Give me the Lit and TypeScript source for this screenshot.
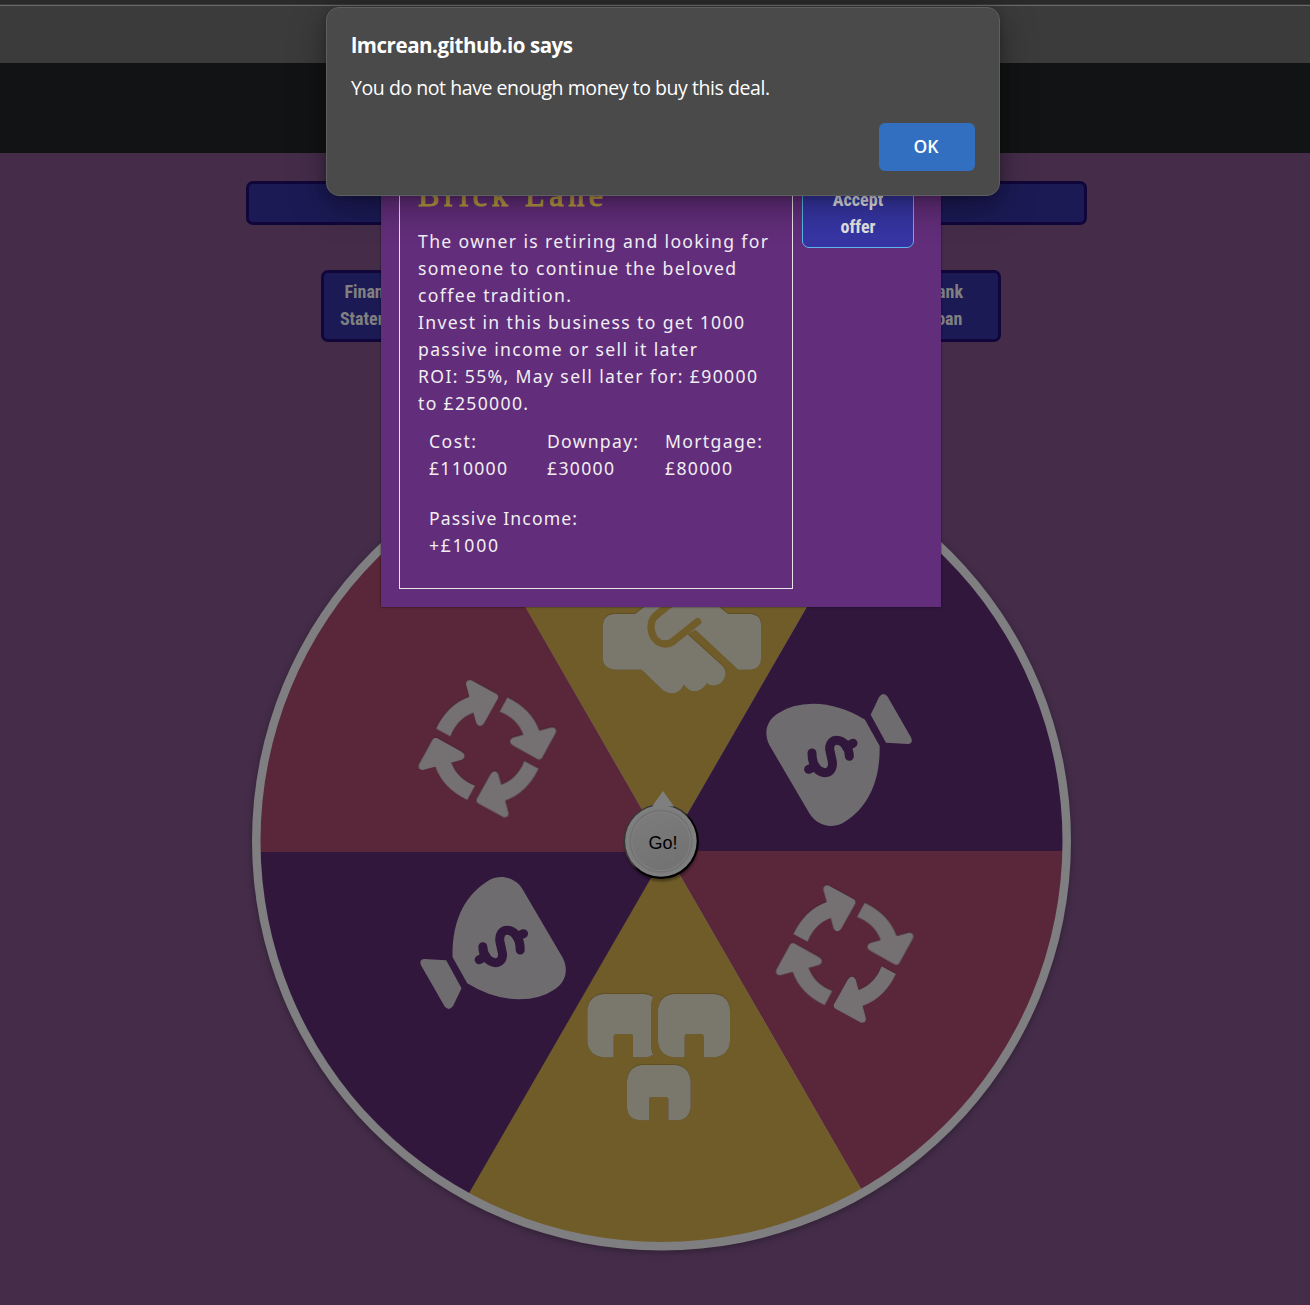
import { LitElement, html, css, svg } from "lit";
import { customElement, property } from "lit/decorators.js";

/** One line of text whose tracking is computed so that it spans a given width. */
@customElement("fit-text")
class FitText extends LitElement {
  @property({ type: Number }) w = 0;
  static styles = css`
    :host { display: block; white-space: nowrap; }
    .t { display: inline-block; }
  `;
  firstUpdated() {
    const el = this.renderRoot.querySelector(".t") as HTMLElement;
    const n = Math.max(1, (this.textContent || "").trim().length - 1);
    const natural = el.getBoundingClientRect().width;
    el.style.letterSpacing = `${((this.w - natural) / n).toFixed(3)}px`;
  }
  render() {
    return html`<span class="t"><slot></slot></span>`;
  }
}

@customElement("spin-wheel")
class SpinWheel extends LitElement {
  static styles = css`
    :host { display: block; width: 840px; height: 840px; }
    svg { display: block; }
    .pink { fill: #59263a; }
    .gold { fill: #705c28; }
    .plum { fill: #31173c; }
    .on-pink { fill: #757072; }
    .on-gold { fill: #7a776c; }
    .on-plum { fill: #6f6c70; }
    .go { font: 18px "Liberation Sans", Arial, sans-serif; fill: #000; }
    .icon { filter: drop-shadow(0 -0.5px 0.6px rgba(0, 0, 0, 0.4)); }
  `;
  private arrow =
    "M108 206 Q143 133 208 110 L198 73 Q198 58 213 60 L290 102 Q297 107 294 115 L252 190 Q240 206 229 190 L220 158 Q172 176 151 229 Z";
  private cycle() {
    return svg`<g class="on-pink">${[0, 90, 180, 270].map(
      (a) => svg`<path d=${this.arrow} transform="rotate(${a} 262 266)"/>`
    )}</g>`;
  }
  private bag() {
    return svg`<g class="on-plum">
      <path d="M389 198 L345 119 Q270 72 190 71 Q125 71 82 101 C48 124 41 160 58 195 L178 400 C198 434 240 448 277 430 C350 388 391 310 389 198Z"/>
      <path d="M362 104 L387 52 Q400 33 413 50 L484 174 Q490 190 474 192 L408 188Z"/>
      <g fill="none" stroke="#31173c" stroke-width="27" stroke-linecap="round">
        <path d="M186 219 C186 262 208 278 225 278 C243 278 249 262 247 245 L239 208 C238 188 250 181 260 181 C282 181 298 205 298 229"/>
        <path d="M176 268 L196 259 M309 190 L289 200"/>
      </g></g>`;
  }
  render() {
    return html`<svg width="840" height="840" viewBox="240 430 840 840">
      <defs>
        <clipPath id="disc"><circle cx="661.5" cy="841" r="401" /></clipPath>
        <linearGradient id="face" x1="0" y1="0" x2="0.4" y2="1">
          <stop offset="0" stop-color="#7c7c7c" />
          <stop offset="1" stop-color="#737373" />
        </linearGradient>
        <linearGradient id="rim" x1="0.15" y1="0.15" x2="0.85" y2="0.85">
          <stop offset="0.45" stop-color="#363636" />
          <stop offset="0.55" stop-color="#000" />
        </linearGradient>
        <filter id="soft" x="-20%" y="-20%" width="140%" height="140%"><feGaussianBlur stdDeviation="4" /></filter>
        <filter id="fine" x="-20%" y="-20%" width="140%" height="140%"><feGaussianBlur stdDeviation="0.8" /></filter>
      </defs>
      <circle cx="661.5" cy="843" r="409" fill="#000" opacity=".35" filter="url(#soft)" />
      <circle cx="661.5" cy="841" r="409.5" fill="#7f7e80" />
      <g clip-path="url(#disc)">
        <path class="gold" d="M666 851 L366 331.4 H966Z" />
        <path class="plum" d="M666 851 L966 331.4 H1166 V851Z" />
        <path class="pink" d="M666 851 H1166 V1370.6 H966Z" />
        <path class="gold" d="M666 851 L966 1370.6 H366Z" />
        <path class="plum" d="M666 852 L366 1371.6 H166 V852Z" />
        <path class="pink" d="M666.4 852 H166 V331.4 H366.4Z" />
      </g>

      <g class="icon" transform="translate(400 660) scale(.33333)">${this.cycle()}</g>
      <g class="icon" transform="translate(757.3 865.3) scale(.33333)">${this.cycle()}</g>
      <g transform="translate(750 680) scale(.33333)">${this.bag()}</g>
      <g transform="rotate(180 666.1 851.5) translate(750 680) scale(.33333)">${this.bag()}</g>

      <g class="icon" transform="translate(580 590) scale(.33333)">
        <path class="on-gold" d="M102 72 H165 L200 45 H410 L445 72 H510 Q543 74 543 105 V205 Q543 237 510 239 H475 L346 119 L323 133 L424 224 Q437 236 437 250 Q433 285 400 287 Q388 287 381 280 Q365 304 345 304 Q325 303 312 284 Q298 310 275 310 Q258 309 245 297 L185 239 H102 Q70 236 68 205 V105 Q70 74 102 72Z" />
        <path d="M275 38 L228 76 C198 103 216 162 256 162 Q268 162 278 155 L353 95" fill="none" stroke="#705c28" stroke-width="22" stroke-linecap="round" />
      </g>

      <g class="icon on-gold" transform="translate(570 970) scale(.33333)">
        <path d="M102 72 H222 Q236 72 249 80 Q243 95 243 115 V220 Q243 240 249 254 Q236 262 222 262 H189 V200 Q189 192 181 192 H139 Q131 192 131 200 V262 H102 Q56 258 52 214 V120 Q56 76 102 72Z" />
        <path d="M312 72 H432 Q476 76 480 120 V214 Q476 258 432 262 H401 V200 Q401 192 393 192 H352 Q344 192 344 200 V262 H312 Q268 258 264 214 V120 Q268 76 312 72Z" />
        <path d="M216 285 H316 Q358 290 362 332 V410 Q358 448 322 451 H295 V389 Q295 381 287 381 H245 Q237 381 237 389 V451 H208 Q174 448 171 414 V332 Q175 290 216 285Z" />
      </g>

      <circle cx="661.5" cy="844.5" r="37" fill="#000" opacity=".35" filter="url(#fine)" />
      <circle cx="661.2" cy="841.4" r="37.6" fill="url(#rim)" />
      <circle cx="660.9" cy="841" r="35.8" fill="#7f7f7f" />
      <path d="M663 791 L674 806.5 H652Z" fill="#7f7f7f" />
      <circle cx="661" cy="841.3" r="30.8" fill="#666" filter="url(#fine)" />
      <circle cx="661" cy="841.3" r="30" fill="#808080" />
      <circle cx="661" cy="841.3" r="28.8" fill="url(#face)" />
      <text class="go" x="648.5" y="849">Go!</text>
    </svg>`;
  }
}

@customElement("app-root")
class AppRoot extends LitElement {
  static styles = css`
    :host { display: block; position: relative; width: 1310px; height: 1305px; overflow: hidden; background: #452d4a; }
    * { box-sizing: border-box; }
    .page { display: flex; flex-direction: column; align-items: center; }
    .tabs { align-self: stretch; height: 5px; background: #2a2a2a; border-bottom: 1px solid #3a3a3a; }
    .tools { align-self: stretch; height: 58px; background: #3b3b3b; border-top: 1px solid #6a6a6a; }
    .nav { align-self: stretch; height: 90px; background: #111314; }
    .bar { width: 841px; height: 44px; margin: 28px 0 0 23px; border: 3px solid #10063a; border-radius: 7px; background: #1b1a55; }
    .row { width: 680px; margin: 45px 0 0 12px; display: flex; justify-content: space-between; }
    .btn { width: 112px; height: 72px; padding-bottom: 2px; border: 3px solid #10063a; border-radius: 7px; background: #1b1a55; color: #808080;
      display: flex; flex-direction: column; align-items: center; justify-content: center; }
    .cond { font: 700 18px/27px "Roboto Condensed", Roboto, sans-serif; font-stretch: 75%; }
    spin-wheel { margin: 88px 0 0 10px; }

    .modal { position: absolute; left: 381px; top: 60px; width: 560px; height: 547px; background: #622d7a; padding: 18px;
      display: flex; gap: 9px; align-items: stretch; box-shadow: 0 0 2px rgba(0, 0, 0, 0.6); }
    .card { width: 394px; border: 1px solid #e9e4ec; padding: 93px 18px 0; color: #f1eef2; font: 17.6px/27px "Noto Sans", "Open Sans", sans-serif; }
    .title { font: 32px/46px "Liberation Serif", serif; color: #b89a40; -webkit-text-stroke: 1.1px #b89a40; margin: 0 0 10px; }
    .facts { display: grid; grid-template-columns: 118px 118px 1fr; row-gap: 23px; padding: 11px 0 0 11px; }
    .wide { grid-column: 1 / 4; }
    .accept { width: 112px; height: 72px; margin-top: 98px; padding-top: 2px; border: 1px solid #5bb8e8; border-radius: 7px; background: #3635a3; color: #e4e4e4;
      display: flex; flex-direction: column; align-items: center; justify-content: center; }

    .alert { position: absolute; left: 326px; top: 7px; width: 674px; height: 189px; border: 1px solid #5e5e5e; border-radius: 13px;
      background: #4a4a4a; color: #fff; padding: 23px 24px; box-shadow: 0 10px 36px rgba(0, 0, 0, 0.36), 0 2px 10px rgba(0, 0, 0, 0.2);
      display: flex; flex-direction: column; font-family: "Open Sans", "Noto Sans", sans-serif; }
    .who { font-size: 20.5px; line-height: 28px; font-weight: 700; }
    .msg { font-size: 19.5px; line-height: 28px; margin-top: 15px; }
    .ok { align-self: flex-end; width: 96px; height: 48px; margin-top: 21px; padding: 0 2px 2px 0; border-radius: 6px; background: #326fc0;
      display: flex; align-items: center; justify-content: center; font-size: 17.5px; font-weight: 600; }
  `;
  render() {
    return html`
      <div class="page">
        <div class="tabs"></div>
        <div class="tools"></div>
        <div class="nav"></div>
        <div class="bar"></div>
        <div class="row">
          <div class="btn cond"><span>Financial</span><span>Statement</span></div>
          <div class="btn cond"><span>Bank</span><span>Loan</span></div>
        </div>
        <spin-wheel></spin-wheel>
      </div>

      <div class="modal">
        <div class="card">
          <div class="title"><fit-text w="185">Brick Lane</fit-text></div>
          <fit-text w="350">The owner is retiring and looking for</fit-text>
          <fit-text w="318">someone to continue the beloved</fit-text>
          <fit-text w="153">coffee tradition.</fit-text>
          <fit-text w="326">Invest in this business to get 1000</fit-text>
          <fit-text w="279">passive income or sell it later</fit-text>
          <fit-text w="339">ROI: 55%, May sell later for: £90000</fit-text>
          <fit-text w="110">to £250000.</fit-text>
          <div class="facts">
            <div><fit-text w="47">Cost:</fit-text><fit-text w="78">£110000</fit-text></div>
            <div><fit-text w="91">Downpay:</fit-text><fit-text w="67">£30000</fit-text></div>
            <div><fit-text w="97">Mortgage:</fit-text><fit-text w="67">£80000</fit-text></div>
            <div class="wide"><fit-text w="148">Passive Income:</fit-text><fit-text w="69">+£1000</fit-text></div>
          </div>
        </div>
        <div class="accept cond"><span>Accept</span><span>offer</span></div>
      </div>

      <div class="alert">
        <fit-text class="who" w="222">lmcrean.github.io says</fit-text>
        <fit-text class="msg" w="419">You do not have enough money to buy this deal.</fit-text>
        <div class="ok">OK</div>
      </div>
    `;
  }
}
